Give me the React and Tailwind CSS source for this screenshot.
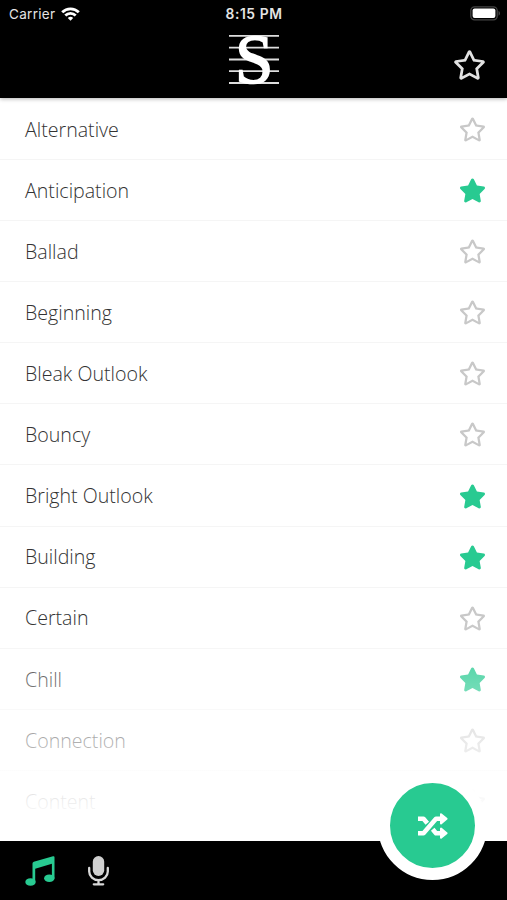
import React from 'react';
import { FaRegStar, FaStar } from 'react-icons/fa';

const moods = [
  { name: 'Alternative', favorite: false },
  { name: 'Anticipation', favorite: true },
  { name: 'Ballad', favorite: false },
  { name: 'Beginning', favorite: false },
  { name: 'Bleak Outlook', favorite: false },
  { name: 'Bouncy', favorite: false },
  { name: 'Bright Outlook', favorite: true },
  { name: 'Building', favorite: true },
  { name: 'Certain', favorite: false },
  { name: 'Chill', favorite: true },
  { name: 'Connection', favorite: false },
  { name: 'Content', favorite: false },
];

const StatusBar = () => (
  <div className="grid grid-cols-3 items-center h-7 pl-[9px] pr-[6px] text-[#e4e4e4] font-['Inter',sans-serif]">
    <div className="flex items-center gap-[6px] text-[13.5px] tracking-[0.3px]">
      <span>Carrier</span>
      <svg width="19" height="14" viewBox="0 0 19 14" fill="none" stroke="#fff" strokeWidth="2.8">
        <path d="M1.2 5.2a11.8 11.8 0 0 1 16.6 0" />
        <path d="M4.3 8.5a7.4 7.4 0 0 1 10.4 0" />
        <path d="M9.5 13.8 6.8 11a3.9 3.9 0 0 1 5.400 0z" fill="#fff" stroke="none" />
      </svg>
    </div>
    <span className="-ml-[2px] text-center text-[13.8px] font-semibold tracking-[0.6px]">8:15 PM</span>
    <svg className="justify-self-end -mt-[2px]" width="31" height="15" viewBox="0 0 31 15">
      <rect x="0.8" y="0.8" width="26.4" height="13" rx="3.8" fill="none" stroke="#444" strokeWidth="1.3" />
      <rect x="2.6" y="2.6" width="22.8" height="9.4" rx="2" fill="#fff" />
      <path d="M28.6 5c1.6.7 1.6 4 0 4.700z" fill="#555" />
    </svg>
  </div>
);

const Logo = () => (
  <svg className="overflow-visible" width="50" height="52" viewBox="0 0 50 52">
    <path d="M0 1.900h50M0 13.600h50M0 25.500h50M0 37.200h50M0 49h50" stroke="#dedede" strokeWidth="1.8" />
    <text
      x="25.200"
      y="49"
      textAnchor="middle"
      fill="#fff"
      stroke="#fff"
      strokeWidth="1.6"
      className="font-['Liberation_Serif',serif] text-[69px]"
    >
      S
    </text>
  </svg>
);

const ShuffleIcon = () => (
  <svg width="32" height="28" viewBox="0 0 32 28" fill="none" stroke="#fff" strokeWidth="4.6" strokeLinejoin="round">
    <path d="M1 21.200h5.500L19 6.800h5" />
    <path d="M1 6.800h5.500l3.800 4.400M15.700 17.200 19 21.200h5" />
    <path d="M24 2.200v9.200l5.600-4.600zM24 16.600v9.200l5.600-4.600z" fill="#fff" strokeWidth="2" />
  </svg>
);

const Header = () => (
  <header className="relative z-10 h-[98px] shrink-0 bg-black shadow-[0_1px_4px_rgba(0,0,0,0.3)]">
    <StatusBar />
    <div className="grid grid-cols-3 items-center pt-[6px] pr-[21px] pl-[21px]">
      <span />
      <div className="flex justify-center">
        <Logo />
      </div>
      <FaRegStar className="justify-self-end mt-[9px] w-[33px] h-[30px] text-[#e2e2e2]" />
    </div>
  </header>
);

const MoodRow = ({ mood }) => (
  <li className="flex items-center justify-between h-[61.1px] shrink-0 border-b border-[#f5f5f5] pl-[25px] pr-[21.5px]">
    <span className="pt-px text-[19.6px] font-light text-[#333]">{mood.name}</span>
    {mood.favorite ? (
      <FaStar className="mt-px w-[27px] h-[25px] text-[#28ca91]" />
    ) : (
      <FaRegStar className="mt-px w-[27px] h-[25px] text-[#c8c8c8]" />
    )}
  </li>
);

const TabBar = () => (
  <nav className="relative flex items-center h-[59px] shrink-0 bg-black pl-[25px] gap-[33px]">
    <svg width="30" height="30" viewBox="0 0 30 30" fill="#28ca91">
      <path d="M7.500 7.500q0-1.300 1.300-1.700L28 .3q1.500-.4 1.500 1v21h-2.600V7.800L10.200 12.800v13.500H7.500z" />
      <ellipse cx="5.500" cy="26" rx="5.200" ry="3.800" />
      <ellipse cx="24.300" cy="22.300" rx="5.200" ry="3.800" />
    </svg>
    <svg width="21" height="30" viewBox="0 0 21 30" fill="none" stroke="#d8d8d8">
      <rect x="4.800" y="0" width="11.400" height="20" rx="5.700" fill="#cfcfcf" stroke="none" />
      <path d="M1.200 12v3.500a9.300 8.600 0 0 0 18.600 0V12M10.500 24.500v3.500M5.800 28.300h9.400" strokeWidth="2.3" strokeLinecap="round" />
    </svg>
  </nav>
);

const App = () => {
  return (
    <div className="relative flex flex-col h-[900px] w-[507px] overflow-hidden bg-white font-['Open_Sans',sans-serif]">
      <Header />
      <main className="relative flex-1 min-h-0 overflow-hidden">
        <ul className="flex flex-col pt-[0.9px]">
          {moods.map((mood) => (
            <MoodRow key={mood.name} mood={mood} />
          ))}
        </ul>
        <div className="absolute inset-x-0 bottom-0 h-[220px] bg-linear-to-t from-white from-10% to-transparent" />
      </main>
      <TabBar />
      <button className="absolute left-[378px] top-[771px] flex items-center justify-center size-[109px] rounded-full border-[12px] border-white bg-[#28ca91]">
        <ShuffleIcon />
      </button>
    </div>
  );
};

export default App;
